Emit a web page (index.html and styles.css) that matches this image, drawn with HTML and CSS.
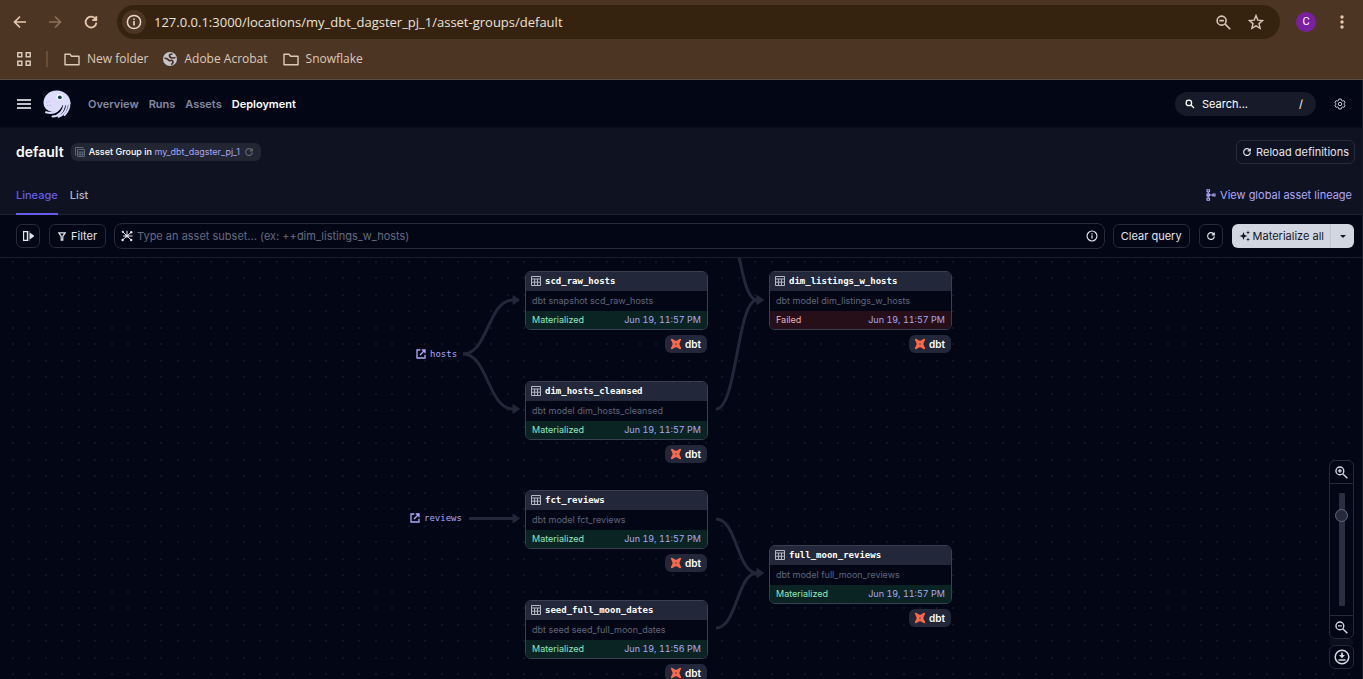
FILE: index.html
```html
<!DOCTYPE html>
<html lang="en">
<head>
<meta charset="utf-8">
<title>default - Asset Group</title>
<link rel="stylesheet" href="styles.css">
</head>
<body>
<svg class="defs" aria-hidden="true">
  <symbol id="refresh" viewBox="0 0 16 16"><path d="M12.6 5.2A5.4 5.4 0 1 0 13.4 8.6M13.3 2.2v4H9.2" fill="none" stroke="currentColor" stroke-width="1.8"/></symbol>
  <symbol id="folder" viewBox="0 0 16 14"><path d="M1 2.2h5l1.6 2H15v8.6H1z" fill="none" stroke="currentColor" stroke-width="1.4" stroke-linejoin="round"/></symbol>
  <symbol id="info" viewBox="0 0 16 16"><circle cx="8" cy="8" r="6.6" fill="none" stroke="currentColor" stroke-width="1.5"/><path d="M7.2 7.1h1.6v4.3H7.2zM7.2 4.4h1.6V6H7.2z" fill="currentColor"/></symbol>
  <symbol id="search" viewBox="0 0 16 16"><g fill="none" stroke="currentColor" stroke-width="2"><circle cx="6.2" cy="6.2" r="4.4"/><path d="M9.5 9.5l5 5"/></g></symbol>
  <symbol id="zoomout" viewBox="0 0 16 16"><g fill="none" stroke="currentColor" stroke-width="1.7"><circle cx="6" cy="6" r="4.8"/><path d="M9.5 9.5l5.7 5.7M3.6 6h4.8"/></g></symbol>
  <symbol id="zoomin" viewBox="0 0 16 16"><g fill="none" stroke="currentColor" stroke-width="1.7"><circle cx="6" cy="6" r="4.8"/><path d="M9.5 9.5l5.7 5.7M3.6 6h4.8M6 3.6v4.8"/></g></symbol>
  <symbol id="table" viewBox="0 0 10 10"><path d="M.5 .5h9v9h-9zM.5 3h9M.5 6.2h9M3.6 3v6.5M6.5 3v6.5" fill="none" stroke="currentColor"/></symbol>
  <symbol id="open" viewBox="0 0 10 10"><path d="M4.3 1H1v8h8V5.7M5.8 1H9v3.2M9 1L4 6" fill="none" stroke="currentColor" stroke-width="1.3"/></symbol>
  <symbol id="dbt" viewBox="0 0 12 12"><path d="M.8 1.6Q1 .6 2 .8L5 2.4Q6 2.9 7 2.4L10 .8q1-.2 1.2.8L9.600 4.900Q9.100 6 9.600 7l1.600 3.300q-.1 1.100-1.200.9L7 9.600Q6 9.100 5 9.600L2 11.200q-1 .2-1.200-.9L2.400 7Q2.900 6 2.400 4.900z" fill="#ff694a"/><circle cx="6" cy="6" r=".7" fill="#262b3d"/></symbol>
</svg>

<header class="browser">
  <div class="browser-bar">
    <button class="plain" aria-label="Back"><svg width="14" height="14" viewBox="0 0 14 14"><path d="M13 7H2M7 1.5L1.5 7 7 12.5" fill="none" stroke="currentColor" stroke-width="1.7"/></svg></button>
    <button class="plain faded" aria-label="Forward"><svg width="14" height="14" viewBox="0 0 14 14"><path d="M1 7h11M7 1.5L12.5 7 7 12.5" fill="none" stroke="currentColor" stroke-width="1.7"/></svg></button>
    <button class="plain" aria-label="Reload"><svg width="16" height="16"><use href="#refresh"/></svg></button>
    <div class="address">
      <button class="site-info" aria-label="Site information"><svg width="16" height="16"><use href="#info"/></svg></button>
      <input class="url" aria-label="Address" value="127.0.0.1:3000/locations/my_dbt_dagster_pj_1/asset-groups/default">
      <button class="plain pale" aria-label="Zoom"><svg width="15" height="15"><use href="#zoomout"/></svg></button>
      <button class="plain pale" aria-label="Bookmark"><svg width="16" height="16" viewBox="0 0 16 16"><path d="M8 1.6l1.8 4.5 4.8.4L11 9.6l1.100 4.700L8 11.800l-4.100 2.500L5 9.600 1.400 6.500l4.800-.4z" fill="none" stroke="currentColor" stroke-width="1.4"/></svg></button>
    </div>
    <button class="avatar" aria-label="Profile">C</button>
    <button class="plain" aria-label="Menu"><svg width="4" height="16" viewBox="0 0 4 16" fill="currentColor"><circle cx="2" cy="3" r="1.7"/><circle cx="2" cy="8" r="1.7"/><circle cx="2" cy="13" r="1.700"/></svg></button>
  </div>
  <nav class="bookmarks" aria-label="Bookmarks">
    <button class="plain pale" aria-label="Apps"><svg width="14" height="14" viewBox="0 0 14 14"><path d="M.8.8h4v4h-4zM9.200.8h4v4h-4zM.8 9.200h4v4h-4zM9.200 9.200h4v4h-4z" fill="none" stroke="currentColor" stroke-width="1.500"/></svg></button>
    <span class="rule"></span>
    <a class="bookmark" href="#"><svg width="16" height="14"><use href="#folder"/></svg>New folder</a>
    <a class="bookmark" href="#"><svg width="14" height="14" viewBox="0 0 14 14"><circle cx="7" cy="7" r="7" fill="#c4c5cc"/><path d="M1.500 6.500Q4 6 5 7.500T8 8.500 10 10 8 12.500M9.500 2Q6 2 6.500 4T10 6l2.500-.5" fill="none" stroke="#4b3423" stroke-width="1.700"/></svg>Adobe Acrobat</a>
    <a class="bookmark" href="#"><svg width="16" height="14"><use href="#folder"/></svg>Snowflake</a>
  </nav>
</header>

<div class="app">
  <header class="topnav">
    <button class="plain white" aria-label="Toggle menu"><svg width="14" height="10" viewBox="0 0 14 10"><path d="M0 1h14M0 5h14M0 9h14" stroke="currentColor" stroke-width="1.600"/></svg></button>
    <svg class="logo" width="28" height="28" viewBox="0 0 28 28"><path d="M.5 13C.5 6 6 .5 13.700.5 21.500.5 27.500 6 27.500 13.500L24 15.500 19.500 15 16 20 9.500 22Q.500 20 .5 13z" fill="#dedcfd"/><g fill="none" stroke="#dedcfd" stroke-width="2" stroke-linecap="round"><path d="M3 22.300Q14 25 18.500 15"/><path d="M9.500 26.500Q19.500 26 21.500 14"/><path d="M15.500 26.700Q23.500 24 24.300 13"/><path d="M21.500 25Q26.500 20 26.500 13"/></g><circle cx="16.500" cy="7" r="3" fill="#fff"/><circle cx="16.800" cy="7.300" r="1.900" fill="#17434a"/><g fill="#a9a4ec"><circle cx="3.500" cy="12.500" r=".6"/><circle cx="6" cy="11.500" r=".6"/><circle cx="4.500" cy="15.500" r=".6"/><circle cx="7" cy="15" r=".6"/></g></svg>
    <nav class="links" aria-label="Main">
      <a href="#">Overview</a><a href="#">Runs</a><a href="#">Assets</a><a href="#" class="on">Deployment</a>
    </nav>
    <button class="search"><svg width="10" height="10"><use href="#search"/></svg><span>Search...</span><kbd>/</kbd></button>
    <button class="plain gear" aria-label="Settings"><svg width="12" height="12" viewBox="0 0 12 12" fill="none" stroke="currentColor"><path d="M4.800 1h2.400l.3 1.500 1 .6 1.400-.5 1.200 2L10 5.600v.8l1.100 1-1.200 2-1.400-.5-1 .6-.3 1.500H4.800l-.3-1.500-1-.6-1.400.5-1.200-2L2 6.400v-.8l-1.100-1 1.200-2 1.400.5 1-.6z"/><circle cx="6" cy="6" r="1.700"/></svg></button>
  </header>

  <section class="pagehead">
    <div class="title-row">
      <h1>default</h1>
      <div class="tag">
        <svg width="10" height="10" viewBox="0 0 10 10" class="muted"><path d="M1.500 8H.5V.5H8v1M2.500 2.500h7v7h-7zM2.500 5h7M2.500 7.300h7M5 5v4.500M7.300 5v4.500" fill="none" stroke="currentColor"/></svg>
        <span>Asset Group in <a href="#">my_dbt_dagster_pj_1</a></span>
        <button class="plain muted" aria-label="Reload location"><svg width="10" height="10"><use href="#refresh"/></svg></button>
      </div>
      <button class="btn reload push"><svg width="10" height="10"><use href="#refresh"/></svg>Reload definitions</button>
    </div>
    <div class="tab-row">
      <nav class="tabs" aria-label="Views"><a href="#" class="on">Lineage</a><a href="#">List</a></nav>
      <a class="global push" href="#"><svg width="10" height="12" viewBox="0 0 10 12"><path d="M1 .8h2.500v2H1zM1 5h2.500v2H1zM1 9.200h2.500v2H1zM7 5h2v2H7zM3.500 6H7M2.200 2.800V9.200" fill="none" stroke="currentColor" stroke-width="1.100"/></svg>View global asset lineage</a>
    </div>
  </section>

  <div class="toolbar">
    <button class="btn square" aria-label="Open sidebar"><svg width="11" height="10" viewBox="0 0 11 10"><path d="M.6.600h3.800v8.800H.6z" fill="none" stroke="currentColor" stroke-width="1.200"/><path d="M6 0v10M7 2l4 3-4 3z" fill="currentColor" stroke="currentColor" stroke-width=".6"/></svg></button>
    <button class="btn filter"><svg width="8" height="9" viewBox="0 0 8 9"><path d="M.8.8h6.400L4.800 4.300v3.900H3.200V4.300z" fill="none" stroke="currentColor" stroke-width="1.200"/></svg>Filter</button>
    <div class="query">
      <svg width="12" height="12" viewBox="0 0 12 12"><path d="M6 6L2 2M6 6l4.200-3.800M6 6l-4.500 4M6 6l4.200 4M6 6V.8M6 6h5.600M6 6H2" stroke="currentColor" stroke-width="1" fill="none"/><g fill="currentColor"><circle cx="1.800" cy="1.800" r="1.100"/><circle cx="10.200" cy="2.200" r="1.200"/><circle cx="1.600" cy="10" r="1.200"/><circle cx="10.200" cy="10" r="1.200"/><circle cx="6" cy="6" r="1.600"/></g></svg>
      <input aria-label="Asset subset" placeholder="Type an asset subset… (ex: ++dim_listings_w_hosts)">
      <button class="plain" aria-label="Query help"><svg width="12" height="12"><use href="#info"/></svg></button>
    </div>
    <button class="btn clear">Clear query</button>
    <button class="btn square" aria-label="Refresh"><svg width="10" height="10"><use href="#refresh"/></svg></button>
    <div class="split">
      <button class="mat"><svg width="11" height="12" viewBox="0 0 11 12" fill="currentColor"><path d="M4.500 2l1.100 2.900L8.500 6 5.600 7.100 4.500 10 3.400 7.100.5 6l2.900-1.100zM9 .5l.5 1.500 1.500.5-1.500.5L9 4.500 8.500 3 7 2.500l1.500-.5zM9 7.500l.5 1.500 1.500.5-1.500.5L9 11.500 8.500 10 7 9.500 8.500 9z"/></svg>Materialize all</button>
      <button class="caret" aria-label="More options"><svg width="6" height="3" viewBox="0 0 6 3"><path d="M0 0h6L3 3z" fill="currentColor"/></svg></button>
    </div>
  </div>

  <main class="canvas">
    <svg class="edges" aria-hidden="true">
      <defs><marker id="tip" viewBox="0 0 8 10" markerWidth="8" markerHeight="10" refX="1" refY="5" markerUnits="userSpaceOnUse" orient="0"><path d="M1 .6L7.500 5 1 9.400z" fill="#222739" stroke="#222739" stroke-linejoin="round"/></marker></defs>
      <g fill="none" stroke="#222739" stroke-width="3" marker-end="url(#tip)">
        <path d="M463 96C488 96 488 42 513 42"/>
        <path d="M463 96C488 96 488 151 513 151"/>
        <path d="M469 260.500H513"/>
        <path d="M716 -68C737 -68 737 42 757 42"/>
        <path d="M716 151C737 151 737 42 757 42"/>
        <path d="M716 261C737 261 737 315 757 315"/>
        <path d="M716 370C737 370 737 315 757 315"/>
      </g>
    </svg>

    <a class="source hosts" href="#"><svg width="10" height="10"><use href="#open"/></svg>hosts</a>
    <a class="source reviews" href="#"><svg width="10" height="10"><use href="#open"/></svg>reviews</a>

    <div class="node n1"><article class="card"><h2><svg width="10" height="10"><use href="#table"/></svg>scd_raw_hosts</h2><p>dbt snapshot scd_raw_hosts</p><div class="status"><span>Materialized</span><a href="#">Jun 19, 11:57 PM</a></div></article><span class="kind"><svg width="12" height="12"><use href="#dbt"/></svg>dbt</span></div>
    <div class="node n2"><article class="card"><h2><svg width="10" height="10"><use href="#table"/></svg>dim_hosts_cleansed</h2><p>dbt model dim_hosts_cleansed</p><div class="status"><span>Materialized</span><a href="#">Jun 19, 11:57 PM</a></div></article><span class="kind"><svg width="12" height="12"><use href="#dbt"/></svg>dbt</span></div>
    <div class="node n3"><article class="card"><h2><svg width="10" height="10"><use href="#table"/></svg>fct_reviews</h2><p>dbt model fct_reviews</p><div class="status"><span>Materialized</span><a href="#">Jun 19, 11:57 PM</a></div></article><span class="kind"><svg width="12" height="12"><use href="#dbt"/></svg>dbt</span></div>
    <div class="node n4"><article class="card"><h2><svg width="10" height="10"><use href="#table"/></svg>seed_full_moon_dates</h2><p>dbt seed seed_full_moon_dates</p><div class="status"><span>Materialized</span><a href="#">Jun 19, 11:56 PM</a></div></article><span class="kind"><svg width="12" height="12"><use href="#dbt"/></svg>dbt</span></div>
    <div class="node n5"><article class="card"><h2><svg width="10" height="10"><use href="#table"/></svg>dim_listings_w_hosts</h2><p>dbt model dim_listings_w_hosts</p><div class="status failed"><span>Failed</span><a href="#">Jun 19, 11:57 PM</a></div></article><span class="kind"><svg width="12" height="12"><use href="#dbt"/></svg>dbt</span></div>
    <div class="node n6"><article class="card"><h2><svg width="10" height="10"><use href="#table"/></svg>full_moon_reviews</h2><p>dbt model full_moon_reviews</p><div class="status"><span>Materialized</span><a href="#">Jun 19, 11:57 PM</a></div></article><span class="kind"><svg width="12" height="12"><use href="#dbt"/></svg>dbt</span></div>

    <div class="zoom">
      <button class="zbtn top" aria-label="Zoom in"><svg width="13" height="13"><use href="#zoomin"/></svg></button>
      <div class="slide"><input type="range" min="0" max="100" value="84" aria-label="Zoom level"></div>
      <button class="zbtn bottom" aria-label="Zoom out"><svg width="13" height="13"><use href="#zoomout"/></svg></button>
      <span class="gap"></span>
      <button class="zbtn single" aria-label="Download as SVG"><svg width="16" height="16" viewBox="0 0 16 16"><circle cx="8" cy="8" r="6.800" fill="none" stroke="currentColor" stroke-width="1.500"/><path d="M7.200 3.500h1.600V6H11L8 9.200 5 6h2.200zM4.500 10.200h7v1.500h-7z" fill="currentColor"/></svg></button>
    </div>
  </main>
</div>
</body>
</html>
```
FILE: styles.css
```css
* { box-sizing: border-box; }
body {
  margin: 0;
  height: 100vh;
  display: flex;
  flex-direction: column;
  overflow: hidden;
  background: #030615;
  color: #e4e6ee;
  font: 11px/16px Inter, sans-serif;
}
a { color: inherit; text-decoration: none; }
svg { flex: none; display: block; }
button, input { font: inherit; color: inherit; margin: 0; }
button { padding: 0; border: 0; background: none; }
.defs { position: absolute; width: 0; height: 0; }
.plain { display: flex; }
.push { margin-left: auto; }
.muted { color: #5e6575; }

/* Browser frame */
.browser {
  flex: none;
  background: #4d3524;
  border-bottom: 1px solid #5b4a42;
  color: #e6c9ae;
  font-family: "Open Sans", "Noto Sans", sans-serif;
}
.browser-bar { display: flex; align-items: center; height: 44px; padding: 0 19px 0 13px; }
.browser-bar > .plain { margin-right: 21px; }
.browser-bar > .plain:last-child { margin: 0; }
.faded { color: #8c7059; }
.pale { color: #d9c8b9; }
.address {
  flex: 1;
  display: flex;
  align-items: center;
  height: 34px;
  gap: 17px;
  margin-right: 16px;
  margin-left: -3px;
  padding: 0 16px 0 5px;
  border-radius: 17px;
  background: #352310;
}
.site-info {
  display: grid;
  place-items: center;
  width: 24px;
  height: 24px;
  border-radius: 50%;
  background: #4d3524;
  color: #ead9ca;
}
.url {
  flex: 1;
  min-width: 0;
  height: 24px;
  margin-left: -9px;
  padding: 0;
  border: 0;
  background: none;
  color: #ece2d8;
  font-size: 13px;
}
.avatar {
  width: 20px;
  height: 20px;
  margin-right: 24px;
  border-radius: 50%;
  background: #7b1fa2;
  color: #fff;
  font: 11px/20px Roboto, sans-serif;
}
.bookmarks { display: flex; align-items: center; height: 30px; padding: 0 17px; margin-bottom: 5px; font-size: 12px; }
.rule { width: 2px; height: 16px; margin: 0 16px 0 15px; background: #6b4e36; }
.bookmark { display: flex; align-items: center; gap: 7px; margin-right: 15px; color: #dccab9; }

/* App frame */
.app { flex: 1; min-height: 0; display: flex; flex-direction: column; border-right: 1px solid #181b29; }
.topnav { display: flex; align-items: center; height: 48px; padding: 0 16px 0 17px; border-bottom: 1px solid #090c1b; }
.white { color: #fff; }
.logo { margin: 0 17px 0 12px; }
.links { display: flex; gap: 10px; color: #838aa0; font-weight: 600; }
.links .on { color: #fff; }
.search {
  display: flex;
  align-items: center;
  gap: 7px;
  width: 141px;
  height: 24px;
  margin-left: auto;
  padding: 0 13px 0 10px;
  border-radius: 12px;
  background: #171b29;
  color: #fff;
}
.search kbd { margin-left: auto; font: inherit; }
.gear { margin-left: 18px; color: #c5c9d3; }

.pagehead { background: #0f1220; border-bottom: 1px solid #22242f; }
.title-row { display: flex; align-items: center; height: 48px; padding: 0 7px 0 16px; }
h1 { margin: 0 7px 0 0; color: #fff; font-size: 14px; line-height: 20px; font-weight: 600; }
.tag {
  display: flex;
  align-items: center;
  gap: 4px;
  height: 18px;
  padding: 0 7px 0 4px;
  border-radius: 6px;
  background: #212632;
  color: #fff;
  font-size: 9px;
  font-weight: 500;
}
.tag a { color: #a9a4f5; font-weight: 400; }
.btn {
  display: flex;
  align-items: center;
  justify-content: center;
  gap: 5px;
  height: 24px;
  padding: 0 7px;
  border: 1px solid #272a38;
  border-radius: 6px;
  white-space: nowrap;
}
.reload { gap: 4px; padding: 0 5px; }
.square { width: 24px; padding: 0; }
.tab-row { display: flex; align-items: center; height: 38px; padding: 0 10px 0 16px; }
.tabs { display: flex; gap: 12px; align-self: stretch; font-weight: 500; color: #b4b8c4; }
.tabs a { margin-bottom: -1px; padding-top: 11px; border-bottom: 2px solid transparent; }
.tabs .on { color: #665ee8; border-color: #665ee8; }
.global { display: flex; align-items: center; gap: 4px; color: #b0a9fa; }

.toolbar { display: flex; align-items: center; height: 43px; padding: 0 8px 0 16px; border-bottom: 1px solid #1b1e2b; }
.filter { margin: 0 8px 0 9px; padding: 0 8px; }
.query {
  flex: 1;
  display: flex;
  align-items: center;
  gap: 4px;
  height: 26px;
  margin-right: 8px;
  padding: 0 6px;
  border: 1px solid #272a38;
  border-radius: 8px;
}
.query input { flex: 1; min-width: 0; padding: 0; border: 0; background: none; }
.query input::placeholder { color: #646b7f; opacity: 1; }
.clear { margin-right: 9px; }
.split { display: flex; height: 24px; margin-left: 9px; border-radius: 6px; overflow: hidden; background: #d2d6e1; color: #141722; }
.mat { display: flex; align-items: center; gap: 3px; padding: 0 6px 0 7px; }
.caret { display: grid; place-items: center; width: 24px; border-left: 1px solid #c1c6d2; }

/* Lineage graph */
.canvas {
  position: relative;
  flex: 1;
  min-height: 0;
  overflow: hidden;
  background-image:
    conic-gradient(from 270deg at 2px 2px, #121624 90deg, transparent 0),
    conic-gradient(from 270deg at 2px 2px, #121624 90deg, transparent 0),
    conic-gradient(from 270deg at 2px 2px, #121624 90deg, transparent 0),
    conic-gradient(from 270deg at 2px 2px, #121624 90deg, transparent 0);
  background-size: 33px 33px;
  background-position: 12px 3px, 28px 3px, 12px 19px, 28px 19px;
}
.edges { position: absolute; inset: 0; width: 100%; height: 100%; }
.source {
  position: absolute;
  display: flex;
  align-items: center;
  gap: 4px;
  color: #b0a9fa;
  font: 9px/12px "DejaVu Sans Mono", monospace;
}
.hosts { left: 416px; top: 90px; }
.reviews { left: 410px; top: 254px; }
.node { position: absolute; width: 183px; display: flex; flex-direction: column; align-items: flex-end; gap: 5px; }
.n1 { left: 525px; top: 13px; }
.n2 { left: 525px; top: 123px; }
.n3 { left: 525px; top: 232px; }
.n4 { left: 525px; top: 342px; }
.n5 { left: 769px; top: 13px; }
.n6 { left: 769px; top: 287px; }
.card {
  align-self: stretch;
  border: 1px solid #3a4052;
  border-radius: 6px;
  overflow: hidden;
  background: #030615;
  font-size: 9px;
}
.card h2 {
  display: flex;
  align-items: center;
  gap: 4px;
  height: 19px;
  margin: 0;
  padding: 0 5px 2px;
  background: #222739;
  color: #fff;
  font: bold 9px/16px "DejaVu Sans Mono", monospace;
}
.card h2 svg { color: #b5b9c4; }
.card p { margin: 0; padding: 0 6px; line-height: 20px; color: #5f677c; }
.status {
  display: flex;
  justify-content: space-between;
  padding: 0 6px;
  line-height: 18px;
  background: #0a2424;
  color: #8eeac0;
  font-variant-numeric: tabular-nums;
}
.failed { background: #260f19; color: #f4aeb0; }
.status a { color: #a8a9f5; }
.kind {
  display: flex;
  align-items: center;
  gap: 3px;
  height: 18px;
  margin-right: 1px;
  padding: 0 6px 0 5px;
  border-radius: 6px;
  background: #222739;
  color: #fff;
  font-size: 10px;
  font-weight: 600;
}

/* Zoom controls */
.zoom { position: absolute; right: 8px; bottom: 10px; width: 25px; display: flex; flex-direction: column; }
.zbtn { display: grid; place-items: center; height: 24px; border: 1px solid #272a38; background: #030615; color: #d6d9e2; }
.top { border-radius: 6px 6px 0 0; }
.bottom { border-radius: 0 0 6px 6px; }
.single { border-radius: 6px; }
.gap { height: 6px; margin: 0 1px; background: #0d0f1f; }
.slide {
  display: flex;
  justify-content: center;
  height: 131px;
  padding: 9px 0;
  border: solid #272a38;
  border-width: 0 1px;
  background: #030615;
}
.slide input { appearance: none; writing-mode: vertical-lr; direction: rtl; width: 13px; height: 113px; background: none; }
.slide input::-webkit-slider-runnable-track { width: 6px; height: 100%; border-radius: 1px; background: #2a2e40; }
.slide input::-webkit-slider-thumb {
  appearance: none;
  width: 13px;
  height: 13px;
  margin-left: -4px;
  margin-right: -4px;
  border: 1px solid #5d6780;
  border-radius: 50%;
  background: #262b3c;
}
```
